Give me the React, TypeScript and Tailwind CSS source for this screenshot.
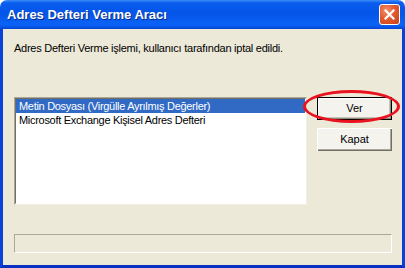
export default function App() {
  const items = [
    'Metin Dosyası (Virgülle Ayrılmış Değerler)',
    'Microsoft Exchange Kişisel Adres Defteri',
  ];

  return (
    <div className="w-[405px] h-[268px] flex flex-col font-['Liberation_Sans',Arial,sans-serif] text-[11px] text-black select-none">
      {/* title bar */}
      <div className="h-[29px] shrink-0 rounded-t-[7px] flex items-center justify-between pl-[7px] pr-[5px] bg-[linear-gradient(to_bottom,#3c8ef9_0%,#0a5ded_10%,#0455e8_45%,#0b63f5_85%,#0652e4_95%,#0a3fc9_100%)]">
        <span className="text-white font-bold text-[13px] [text-shadow:1px_1px_0_#0a2a8a]">
          Adres Defteri Verme Aracı
        </span>
        <div className="w-[21px] h-[21px] rounded-[3px] border border-white bg-[radial-gradient(circle_at_35%_30%,#f2916d_0%,#e35a2f_45%,#c8401c_100%)] flex items-center justify-center">
          <svg width="11" height="11" viewBox="0 0 11 11">
            <path d="M1.5 1.5 L9.5 9.5 M9.5 1.5 L1.5 9.5" stroke="white" strokeWidth="2.2" strokeLinecap="square" />
          </svg>
        </div>
      </div>

      {/* client */}
      <div className="flex-1 flex flex-col bg-[#ece9d8] border-x-[3px] border-b-[3px] border-x-[#0842d7] border-b-[#0831c4] pl-[11px] pr-[10px]">
        <div className="pt-[13px] h-[68px] leading-[13px] tracking-[-0.25px]">
          Adres Defteri Verme işlemi, kullanıcı tarafından iptal edildi.
        </div>

        <div className="flex gap-[10px]">
          <div className="w-[293px] h-[108px] bg-white border border-t-[#aca899] border-l-[#aca899] border-r-[#f1efe2] border-b-[#f1efe2]">
            <div className="h-full border border-t-[#716f64] border-l-[#716f64] border-r-white border-b-white tracking-[-0.3px]">
              {items.map((it, i) => (
                <div
                  key={it}
                  className={`h-[14px] leading-[14px] pl-[3px] whitespace-nowrap ${i === 0 ? 'bg-[#316ac5] text-white' : ''}`}
                >
                  {it}
                </div>
              ))}
            </div>
          </div>

          <div className="flex flex-col gap-[8px]">
            <div className="relative">
              <button className="w-[75px] h-[23px] border border-black bg-[#f4f3ee] shadow-[inset_1px_1px_0_#ffffff,inset_-1px_-1px_0_#8d8b80,inset_-2px_-2px_0_#c8c5b5] text-[11px]">
                Ver
              </button>
              <div className="absolute left-[-14px] top-[-7px] w-[97px] h-[33px] rounded-[50%] border-[3px] border-[#e8131f] pointer-events-none" />
            </div>
            <button className="w-[75px] h-[23px] bg-[#f4f3ee] shadow-[inset_1px_1px_0_#ffffff,inset_-1px_-1px_0_#716f64,inset_-2px_-2px_0_#aca899] text-[11px]">
              Kapat
            </button>
          </div>
        </div>

        <div className="mt-[29px] w-[378px] h-[19px] border border-t-[#aca899] border-l-[#aca899] border-r-white border-b-white" />
      </div>
    </div>
  );
}
